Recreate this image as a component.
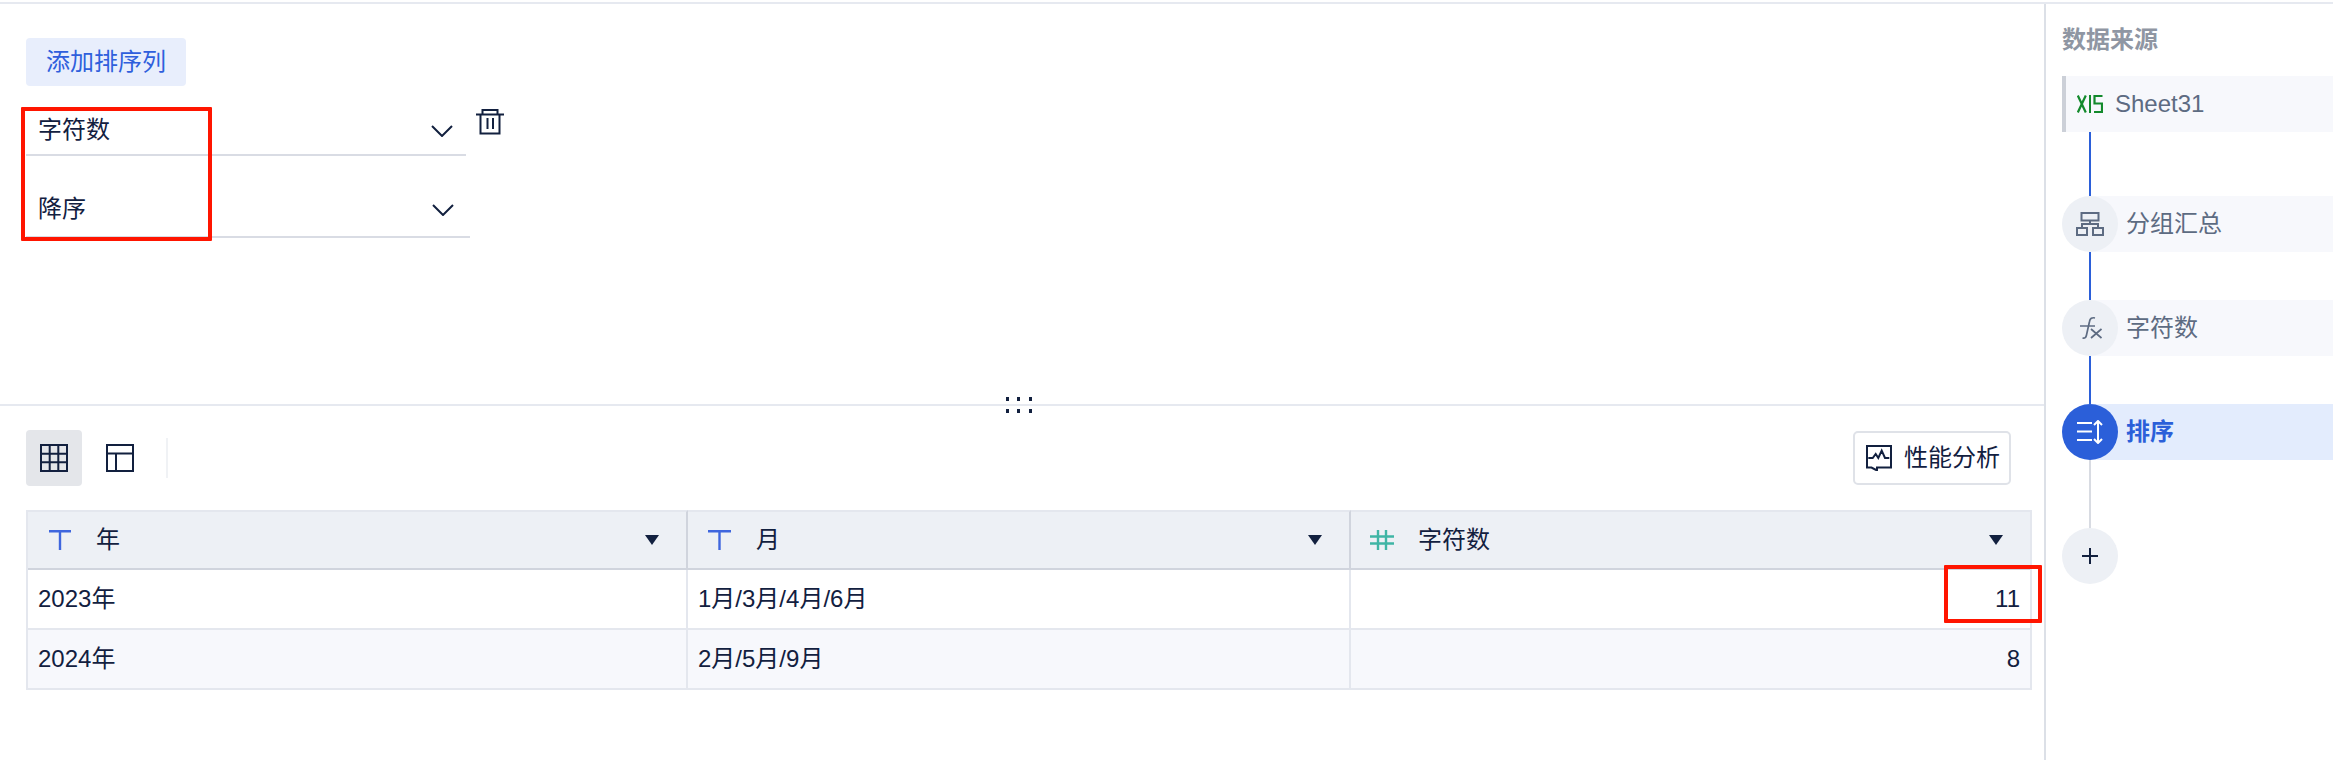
<div class="page">
  <main class="main">
    <section class="top">
      <button class="add">添加排序列</button>
      <div class="form">
        <div class="row">
          <div class="select first"><span>字符数</span>
            <svg class="chev" width="22" height="12" viewBox="0 0 22 12"><path d="M1 1l10 10 10-10" /></svg>
          </div>
          <svg class="trash" width="28" height="26" viewBox="0 0 28 26"><path d="M6.500 5V1h15v4M0 5.500h28M4.500 5.500V24.500h19V5.500M11.500 9v11M17 9v11" /></svg>
        </div>
        <div class="select second"><span>降序</span>
          <svg class="chev" width="22" height="12" viewBox="0 0 22 12"><path d="M1 1l10 10 10-10" /></svg>
        </div>
        <div class="mark form-mark"></div>
      </div>
    </section>
    <div class="split"><i></i><i></i><i></i><i></i><i></i><i></i></div>
    <section class="bottom">
      <div class="toolbar">
        <button class="tool active">
          <svg width="28" height="28" viewBox="0 0 28 28"><path d="M1 1h26v26H1zM1 9.700h26M1 18.300h26M9.700 1v26M18.300 1v26" /></svg>
        </button>
        <button class="tool">
          <svg width="28" height="28" viewBox="0 0 28 28"><path d="M1 1h26v26H1zM1 9.500h26M10 9.500V27" /></svg>
        </button>
        <span class="sep"></span>
        <button class="perf">
          <svg width="26" height="26" viewBox="0 0 26 26"><path d="M5.500 22.500H1V1h24v21.500H11V25.500zM2.300 13h4.400l3-4 2.600 4 3.400-7.300 3.300 7.300h4.300" /></svg>
          性能分析
        </button>
      </div>
      <div class="table">
        <div class="cell head"><svg class="ty" width="22" height="20" viewBox="0 0 22 20"><path d="M0 1.200h22M11 1v19" /></svg><span>年</span><b></b></div>
        <div class="cell head"><svg class="ty" width="23" height="20" viewBox="0 0 23 20"><path d="M0 1.200h23M11.500 1v19" /></svg><span>月</span><b></b></div>
        <div class="cell head"><svg class="hash" width="24" height="20" viewBox="0 0 24 20"><path d="M8 0v20M16 0v20M0 6.500h24M0 13.500h24" /></svg><span>字符数</span><b></b></div>
        <div class="cell">2023年</div>
        <div class="cell">1月/3月/4月/6月</div>
        <div class="cell num">11<div class="mark num-mark"></div></div>
        <div class="cell alt">2024年</div>
        <div class="cell alt">2月/5月/9月</div>
        <div class="cell alt num">8</div>
      </div>
    </section>
  </main>
  <aside class="side">
    <h2>数据来源</h2>
    <div class="source">
      <svg width="26" height="18" viewBox="0 0 26 18"><path class="x" d="M0.800 0.500l8 17M8.800 0.500l-8 17" /><path class="l" d="M13 0v18" /><path class="s" d="M25.500 1h-8v7.500h7.500v8.500h-8" /></svg>
      <span>Sheet31</span>
    </div>
    <div class="line done first-line"></div>
    <div class="step">
      <span class="dot"><svg width="28" height="24" viewBox="0 0 28 24"><path d="M5.500 1h17v7.500h-17zM14 8.500V12M6 16v-4h16v4M1 16h10v7H1zM17 16h10v7H17z" /></svg></span>
      <span class="label">分组汇总</span>
    </div>
    <div class="line done"></div>
    <div class="step">
      <span class="dot"><svg class="fx" width="24" height="26" viewBox="0 0 24 26"><path d="M17 3c-3-.8-5 .5-5.500 3.500L8.500 20c-.5 2.500-1.500 3.500-4 3M2 11h15M13 14l10.500 9M23.500 14l-10.500 9" /></svg></span>
      <span class="label">字符数</span>
    </div>
    <div class="line done"></div>
    <div class="step current">
      <span class="dot"><svg width="28" height="24" viewBox="0 0 28 24"><path d="M1 3h15M1 11.500h15M1 20h15M22 1v22M18 5l4-4 4 4M18 19l4 4 4-4" /></svg></span>
      <span class="label">排序</span>
    </div>
    <div class="line idle"></div>
    <div class="step plus">
      <span class="dot"><svg width="16" height="16" viewBox="0 0 16 16"><path d="M0 8h16M8 0v16" /></svg></span>
    </div>
  </aside>
</div>

<style>
  :global(body) {
    margin: 0;
    background: #fff;
  }
  .page {
    height: 756px;
    margin-top: 2px;
    border-top: 2px solid #e6e9f0;
    display: grid;
    grid-template-columns: 2044px 1fr;
    overflow: hidden;
    color: #12203f;
    font: 24px/1.2 "Liberation Sans", "Noto Sans CJK SC", sans-serif;
  }
  svg {
    display: block;
    flex: none;
    fill: none;
    stroke: currentColor;
    stroke-width: 2;
  }
  button {
    font: inherit;
    margin: 0;
    padding: 0;
    border: 0;
    background: none;
    color: inherit;
  }
  .top {
    height: 400px;
    box-sizing: border-box;
    padding: 34px 0 0 26px;
  }
  .add {
    display: block;
    width: 160px;
    height: 48px;
    border-radius: 4px;
    background: #e8eefc;
    color: #2f5fdc;
  }
  .form {
    position: relative;
    margin-top: 21px;
  }
  .row {
    display: flex;
    align-items: flex-start;
  }
  .select {
    box-sizing: border-box;
    display: flex;
    align-items: center;
    justify-content: space-between;
    border-bottom: 2px solid #d9dce4;
    padding-left: 12px;
  }
  .select.first {
    width: 440px;
    height: 49px;
    padding-right: 13px;
  }
  .select.second {
    width: 444px;
    height: 55px;
    margin-top: 27px;
    padding-right: 16px;
  }
  .trash {
    margin: 2px 0 0 10px;
  }
  .mark {
    position: absolute;
    box-sizing: border-box;
    border: 4px solid #ff1500;
    border-radius: 1px;
    pointer-events: none;
  }
  .form-mark {
    left: -5px;
    top: 0;
    width: 191px;
    height: 134px;
  }
  .split {
    position: relative;
    height: 2px;
    background: #e6e9f0;
  }
  .split i {
    position: absolute;
    width: 3px;
    height: 4px;
    background: #12203f;
  }
  .split i:nth-child(1), .split i:nth-child(4) { left: 1006px; }
  .split i:nth-child(2), .split i:nth-child(5) { left: 1017px; }
  .split i:nth-child(3), .split i:nth-child(6) { left: 1029px; }
  .split i:nth-child(-n+3) { top: -7px; }
  .split i:nth-child(n+4) { top: 5px; }
  .bottom {
    padding: 24px 12px 0 26px;
  }
  .toolbar {
    display: flex;
    align-items: center;
    height: 56px;
    margin-bottom: 24px;
  }
  .tool {
    width: 56px;
    height: 56px;
    margin-right: 10px;
    border-radius: 4px;
    display: grid;
    place-items: center;
  }
  .tool + .tool {
    margin-right: 0;
  }
  .tool.active {
    background: #e4e6ea;
  }
  .sep {
    width: 2px;
    height: 40px;
    margin-left: 18px;
    background: #f0f2f5;
  }
  .perf {
    box-sizing: border-box;
    margin: 0 21px 0 auto;
    width: 158px;
    height: 54px;
    border: 2px solid #dfe2e8;
    border-radius: 5px;
    display: flex;
    align-items: center;
    gap: 12px;
    padding-left: 11px;
    white-space: nowrap;
  }
  .table {
    display: grid;
    grid-template-columns: 660px 663px 1fr;
    grid-template-rows: 60px 60px 60px;
    box-sizing: border-box;
    width: 2006px;
    border-left: 2px solid #e4e7ee;
    border-right: 2px solid #e4e7ee;
  }
  .cell {
    position: relative;
    box-sizing: border-box;
    display: flex;
    align-items: center;
    padding-left: 10px;
    border-right: 2px solid #e4e7ee;
    border-bottom: 2px solid #e4e7ee;
    white-space: nowrap;
  }
  .cell:nth-child(3n) {
    border-right: 0;
  }
  .head {
    background: #edf0f5;
    border-top: 2px solid #e4e7ee;
    border-right-color: #d0d4dd;
    border-bottom-color: #d0d4dd;
    padding-left: 21px;
  }
  .head:nth-child(2) {
    padding-left: 20px;
  }
  .head:nth-child(3) {
    padding-left: 19px;
  }
  .head span {
    margin-left: 25px;
  }
  .head:nth-child(3) span {
    margin-left: 24px;
  }
  .head b {
    margin-left: auto;
    margin-right: 27px;
    width: 0;
    height: 0;
    border-left: 7px solid transparent;
    border-right: 7px solid transparent;
    border-top: 10px solid #12203f;
  }
  .ty {
    color: #3f66de;
    stroke-width: 2.400;
  }
  .hash {
    color: #3fb5a5;
    stroke-width: 2.400;
  }
  .alt {
    background: #f7f8fc;
  }
  .num {
    justify-content: flex-end;
    padding: 0 10px 0 0;
  }
  .num-mark {
    right: -12px;
    top: -5px;
    width: 98px;
    height: 58px;
  }
  .side {
    border-left: 2px solid #dce0e7;
    padding: 21px 0 0 16px;
    color: #5d6b82;
  }
  h2 {
    margin: 0 0 21px;
    height: 30px;
    font-size: 24px;
    line-height: 30px;
    font-weight: 700;
    color: #8f96a3;
  }
  .source {
    box-sizing: border-box;
    height: 56px;
    border-left: 4px solid #ccd0d8;
    background: #f7f8fc;
    display: flex;
    align-items: center;
    gap: 12px;
    padding-left: 11px;
  }
  .source .x, .source .s {
    stroke: #138a2c;
    stroke-width: 2.200;
  }
  .source .l {
    stroke: #138a2c;
  }
  .line {
    width: 2px;
    height: 48px;
    margin-left: 27px;
  }
  .first-line {
    height: 64px;
  }
  .done {
    background: #2b5fd9;
  }
  .idle {
    height: 68px;
    background: #d8dbe2;
  }
  .step {
    height: 56px;
    display: flex;
    align-items: center;
    background: linear-gradient(90deg, #fff 28px, #f7f8fc 28px);
  }
  .dot {
    width: 56px;
    height: 56px;
    border-radius: 50%;
    background: #edf0f5;
    display: grid;
    place-items: center;
    flex: none;
  }
  .fx {
    stroke-width: 1.700;
  }
  .label {
    margin-left: 8px;
    font-size: 24px;
  }
  .current {
    background: linear-gradient(90deg, #fff 28px, #e3ecfd 28px);
  }
  .current .dot {
    background: #2b5fd9;
    color: #fff;
  }
  .current .label {
    color: #2b5fd9;
    font-weight: 700;
  }
  .plus {
    background: none;
  }
  .plus .dot {
    color: #12203f;
  }
</style>
